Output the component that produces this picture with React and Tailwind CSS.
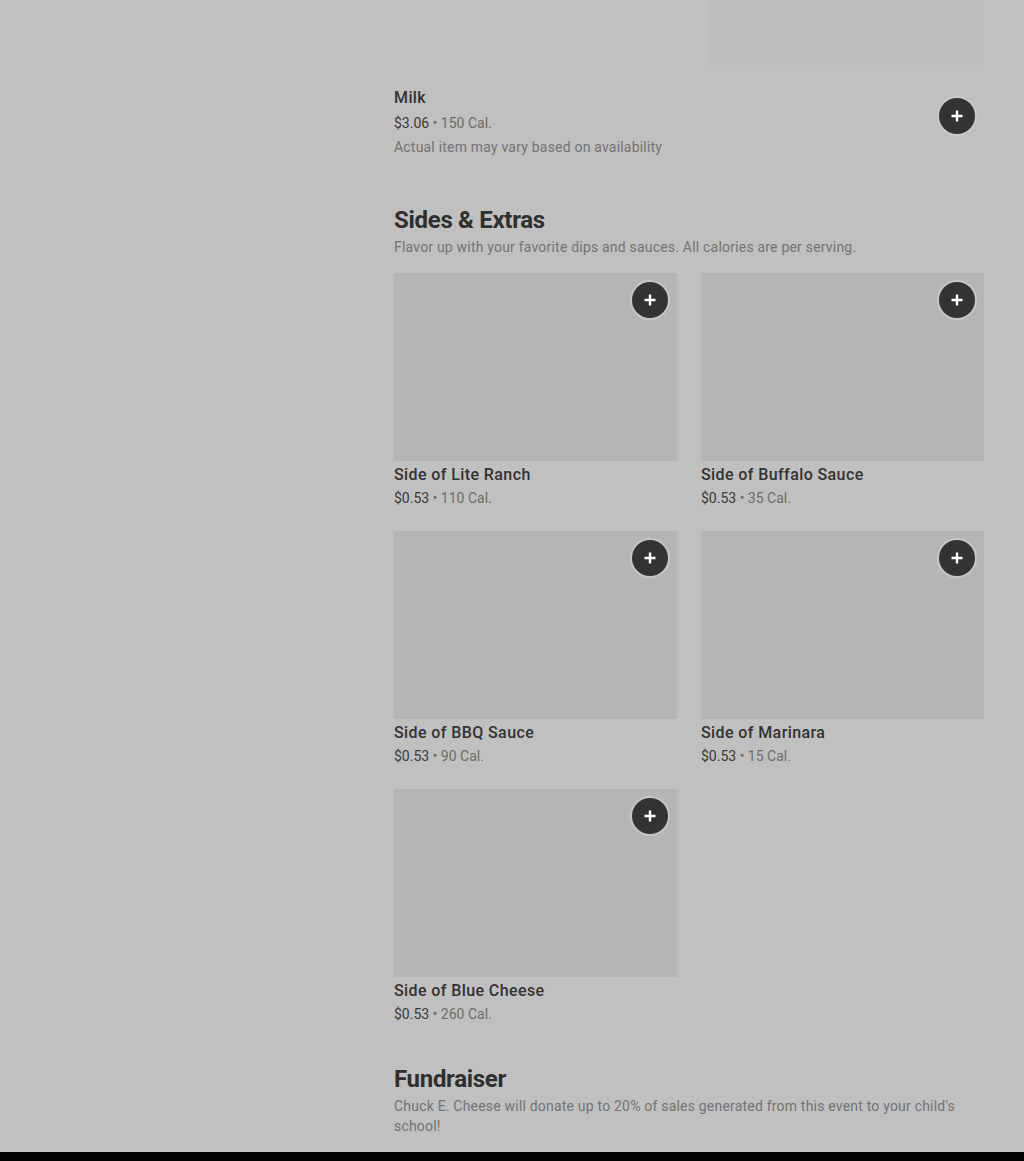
import React from 'react';

const sides = [
    { name: 'Side of Lite Ranch', price: '$0.53', cal: '110 Cal.' },
    { name: 'Side of Buffalo Sauce', price: '$0.53', cal: '35 Cal.' },
    { name: 'Side of BBQ Sauce', price: '$0.53', cal: '90 Cal.' },
    { name: 'Side of Marinara', price: '$0.53', cal: '15 Cal.' },
    { name: 'Side of Blue Cheese', price: '$0.53', cal: '260 Cal.' },
];

const AddButton = ({ className = '' }) => (
    <button className={`w-9 h-9 rounded-full bg-[#333333] flex items-center justify-center shadow-[0_0_0_2px_rgba(205,205,205,0.7)] ${className}`}>
        <svg width="14" height="14" viewBox="0 0 14 14" fill="none">
            <path d="M7 1.5v11M1.5 7h11" stroke="#ffffff" strokeWidth="2.4" />
        </svg>
    </button>
);

const PriceLine = ({ price, cal }) => (
    <p className="text-[14px] leading-5">
        <span className="text-[#3a3a3a]">{price}</span>
        <span className="text-[#6c6c6c]"> • {cal}</span>
    </p>
);

const SideCard = ({ item }) => (
    <div className="flex flex-col">
        <div className="relative h-[188px] bg-[#b5b5b5]">
            <AddButton className="absolute top-[9px] right-[9px]" />
        </div>
        <h3 className="mt-[4px] text-[16px] leading-5 font-medium tracking-[0.4px] text-[#333333]">{item.name}</h3>
        <div className="mt-[3px]">
            <PriceLine price={item.price} cal={item.cal} />
        </div>
    </div>
);

export default function App() {
    return (
        <div className="w-full bg-[#c0c0c0] font-['Roboto',sans-serif]">
            <div className="h-[1152px] overflow-hidden flex">
                {/* left rail */}
                <div className="w-[394px] shrink-0" />

                {/* menu column */}
                <main className="w-[590px] flex flex-col">
                    <div className="flex justify-end">
                        <div className="w-[276px] h-[65px] bg-[#bdbdbd]" />
                    </div>

                    {/* Milk */}
                    <div className="mt-[23px] flex items-start justify-between">
                        <div className="flex flex-col">
                            <h3 className="text-[16px] leading-5 font-medium tracking-[0.4px] text-[#333333]">Milk</h3>
                            <div className="mt-[5px]">
                                <PriceLine price="$3.06" cal="150 Cal." />
                            </div>
                            <p className="mt-1 text-[14px] leading-5 tracking-[0.2px] text-[#737373]">Actual item may vary based on availability</p>
                        </div>
                        <AddButton className="mt-[10px] mr-[9px]" />
                    </div>

                    {/* Sides & Extras */}
                    <section className="mt-[47px]">
                        <h2 className="text-[24px] leading-8 font-bold tracking-[-0.3px] text-[#2f2f2f]">Sides &amp; Extras</h2>
                        <p className="mt-[1px] text-[14px] leading-5 tracking-[0.2px] text-[#737373]">
                            Flavor up with your favorite dips and sauces. All calories are per serving.
                        </p>
                        <div className="mt-4 grid grid-cols-2 gap-x-6 gap-y-[23px]">
                            {sides.map((item) => (
                                <SideCard key={item.name} item={item} />
                            ))}
                        </div>
                    </section>

                    {/* Fundraiser */}
                    <section className="mt-[39px]">
                        <h2 className="text-[24px] leading-8 font-bold tracking-[-0.3px] text-[#2f2f2f]">Fundraiser</h2>
                        <p className="mt-[1px] text-[14px] leading-5 tracking-[0.2px] text-[#737373]">
                            Chuck E. Cheese will donate up to 20% of sales generated from this event to your child's school!
                        </p>
                        <div className="mt-4 grid grid-cols-2 gap-x-6">
                            <div className="h-[188px] bg-[#bebebe]" />
                        </div>
                    </section>
                </main>
            </div>
            <div className="h-[9px] bg-black" />
        </div>
    );
}
